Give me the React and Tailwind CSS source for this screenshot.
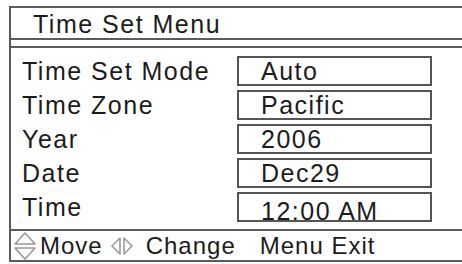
import React from "react";

const rows = [
  { label: "Time Set Mode", value: "Auto" },
  { label: "Time Zone", value: "Pacific" },
  { label: "Year", value: "2006" },
  { label: "Date", value: "Dec29" },
  { label: "Time", value: "12:00 AM", low: true },
];

function UpDown() {
  return (
    <svg width="24" height="30" viewBox="0 0 24 30" className="shrink-0">
      <path d="M12 2 L22 13 L2 13 Z" fill="none" stroke="#9a9a9a" strokeWidth="1.6" strokeLinejoin="round" />
      <path d="M2 17 L22 17 L12 28 Z" fill="none" stroke="#9a9a9a" strokeWidth="1.6" strokeLinejoin="round" />
    </svg>
  );
}

function LeftRight() {
  return (
    <svg width="24" height="20" viewBox="0 0 24 20" className="shrink-0">
      <path d="M10 2 L2 10 L10 18 Z" fill="none" stroke="#9a9a9a" strokeWidth="1.6" strokeLinejoin="round" />
      <path d="M14 2 L22 10 L14 18 Z" fill="none" stroke="#9a9a9a" strokeWidth="1.6" strokeLinejoin="round" />
    </svg>
  );
}

export default function App() {
  return (
    <div
      className="w-[462px] h-[264px] overflow-hidden bg-white text-[#1c1c1c]"
      style={{ fontFamily: '"Liberation Sans", Arial, sans-serif' }}
    >
      <div className="ml-[9px] mt-[6px] w-[470px] border-l-2 border-t-2 border-b-2 border-[#5c5c5c]">
        <div className="h-[32px] border-b-2 border-[#5c5c5c] pl-[22px] text-[25px] leading-[32px] tracking-[1.5px]">
          Time Set Menu
        </div>
        <div className="h-[6px]" />
        <div className="border-t-2 border-[#5c5c5c] pt-[8px] pb-[7px] pl-[11px] flex flex-col gap-[4px]">
          {rows.map((r) => (
            <div key={r.label} className="flex items-center h-[30px]">
              <div className="w-[215px] text-[25px] leading-[30px] tracking-[1.5px] whitespace-nowrap">
                {r.label}
              </div>
              <div className="w-[195px] h-[30px] border-2 border-[#555555] overflow-hidden pl-[22px] text-[25px] tracking-[1.5px] whitespace-nowrap">
                <div className={r.low ? "leading-[26px] pt-[4px]" : "leading-[26px]"}>{r.value}</div>
              </div>
            </div>
          ))}
        </div>
        <div className="h-[31px] border-t-2 border-[#5c5c5c] flex items-center pl-[2px] text-[24px] leading-[29px] tracking-[1px] whitespace-nowrap">
          <UpDown />
          <span className="ml-[3px]">Move</span>
          <span className="ml-[7px] flex items-center"><LeftRight /></span>
          <span className="ml-[12px]">Change</span>
          <span className="ml-[24px]">Menu Exit</span>
        </div>
      </div>
    </div>
  );
}
